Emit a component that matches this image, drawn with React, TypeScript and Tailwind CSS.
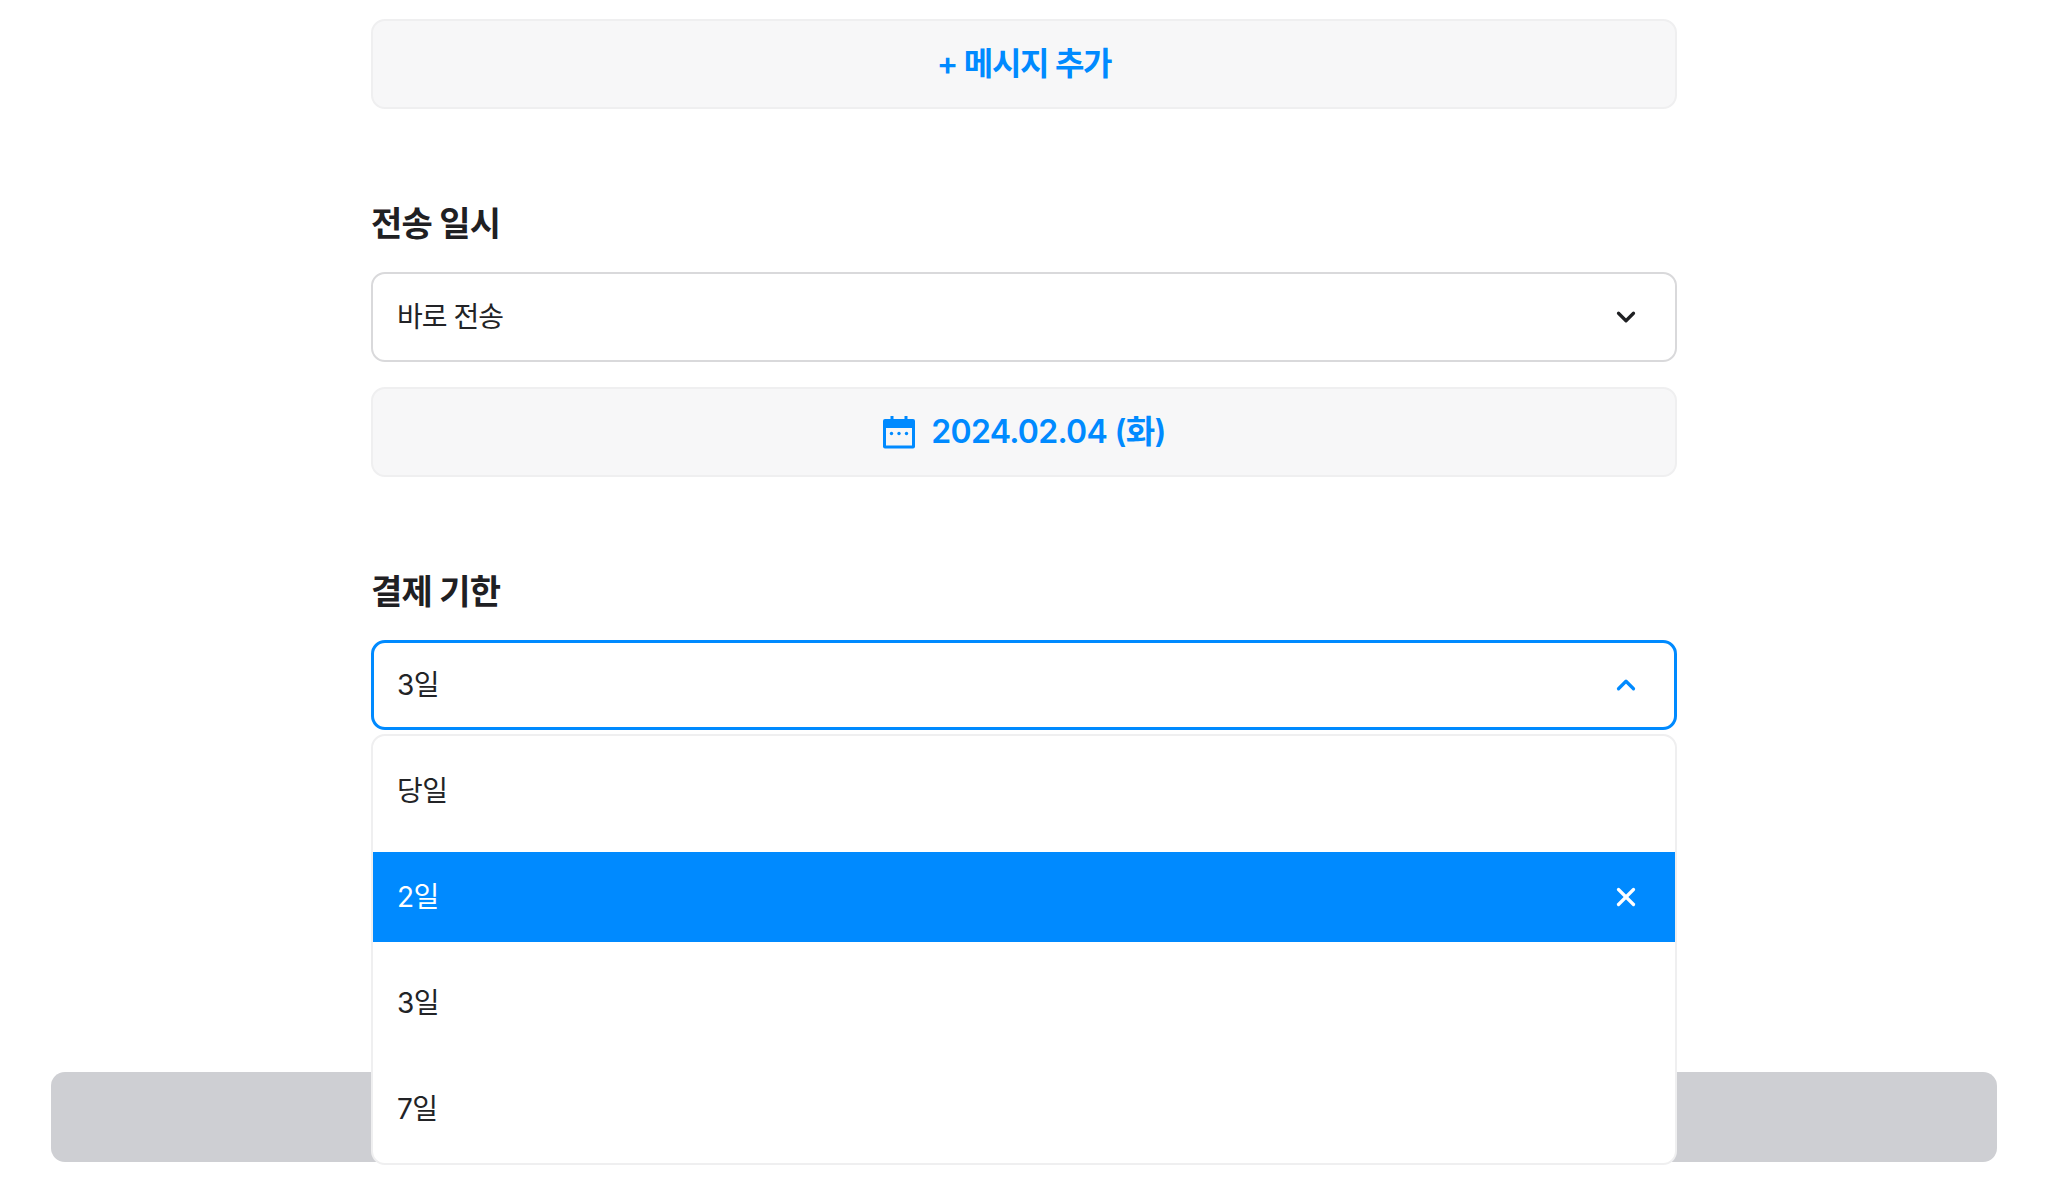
import { ChevronDown, ChevronUp, X } from "lucide-react";

const font = { fontFamily: '"Inter", "Noto Sans CJK KR", sans-serif' };

const options = ["당일", "2일", "3일", "7일"];

function CalendarIcon() {
  return (
    <svg width="34" height="34" viewBox="0 0 34 34" fill="none">
      <path d="M8.5 1h3v5h-3zM22.5 1h3v5h-3z" fill="#008aff" />
      <rect x="1" y="4" width="32" height="29.5" rx="2" fill="#008aff" />
      <rect x="4" y="13" width="26" height="17.5" fill="#f6f6f7" />
      <circle cx="9.5" cy="18.5" r="1.7" fill="#008aff" />
      <circle cx="17" cy="18.5" r="1.7" fill="#008aff" />
      <circle cx="24.5" cy="18.5" r="1.7" fill="#008aff" />
    </svg>
  );
}

export default function App() {
  return (
    <div className="relative h-[1200px] w-full overflow-hidden bg-white" style={font}>
      <div className="mx-auto flex w-[1306px] flex-col pt-[19px]">
        <button className="flex h-[90px] items-center justify-center rounded-[14px] border-2 border-[#efeff0] bg-[#f7f7f8] text-[32px] font-semibold tracking-[-1.3px] text-[#008aff]">
          + 메시지 추가
        </button>

        <h2 className="mt-[93px] h-[44px] text-[34px] leading-[44px] font-bold tracking-[-0.8px] text-[#1f2023]">전송 일시</h2>
        <div className="mt-[26px] flex h-[90px] items-center justify-between rounded-[14px] border-2 border-[#d9d9db] bg-white pr-[34px] pl-[24px] text-[28px] tracking-[-1px] text-[#222326]">
          <span>바로 전송</span>
          <ChevronDown size={30} strokeWidth={2.6} className="text-[#1f2023]" />
        </div>
        <button className="mt-[25px] flex h-[90px] items-center justify-center gap-[15px] rounded-[14px] border-2 border-[#efeff0] bg-[#f7f7f8] text-[32px] font-semibold tracking-[-0.7px] text-[#008aff]">
          <CalendarIcon />
          2024.02.04 (화)
        </button>

        <h2 className="mt-[93px] h-[44px] text-[34px] leading-[44px] font-bold tracking-[-0.8px] text-[#1f2023]">결제 기한</h2>
        <div className="relative mt-[26px]">
          <div className="flex h-[90px] items-center justify-between rounded-[14px] border-[3px] border-[#008aff] bg-white pr-[33px] pl-[23px] text-[28px] tracking-[-0.6px] text-[#222326]">
            <span>3일</span>
            <ChevronUp size={30} strokeWidth={2.6} className="text-[#008aff]" />
          </div>
          <div className="absolute top-[94px] left-0 z-10 flex h-[431px] w-full flex-col gap-[16px] overflow-hidden rounded-[14px] border-2 border-[#efeff0] bg-white pt-[10px] text-[28px] tracking-[-0.6px] text-[#222326]">
            {options.map((option) =>
              option === "2일" ? (
                <div key={option} className="flex h-[90px] shrink-0 items-center justify-between bg-[#008aff] pr-[34px] pl-[24px] text-white">
                  <span>{option}</span>
                  <X size={30} strokeWidth={2.6} />
                </div>
              ) : (
                <div key={option} className="flex h-[90px] shrink-0 items-center pl-[24px]">
                  <span>{option}</span>
                </div>
              )
            )}
          </div>
        </div>
      </div>

      <div className="absolute top-[1072px] left-[51px] h-[90px] w-[1946px] rounded-[14px] bg-[#cecfd3]" />
    </div>
  );
}
